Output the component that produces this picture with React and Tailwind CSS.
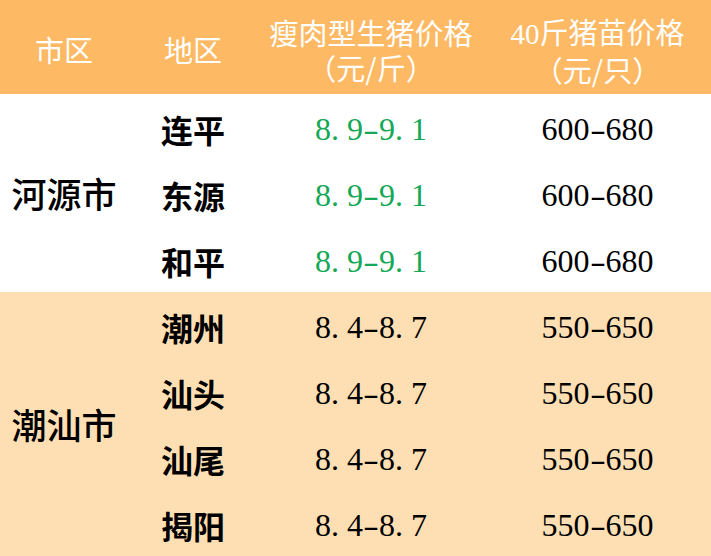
const cjk = '"Noto Sans CJK SC", "Noto Sans", sans-serif';
const num = '"Liberation Serif", "Noto Sans CJK SC", serif';

const groups = [
  {
    city: '河源市',
    bg: 'bg-white',
    rows: [
      { area: '连平', price: '8.9-9.1', piglet: '600-680', green: true },
      { area: '东源', price: '8.9-9.1', piglet: '600-680', green: true },
      { area: '和平', price: '8.9-9.1', piglet: '600-680', green: true },
    ],
  },
  {
    city: '潮汕市',
    bg: 'bg-[#fddfb3]',
    rows: [
      { area: '潮州', price: '8.4-8.7', piglet: '550-650' },
      { area: '汕头', price: '8.4-8.7', piglet: '550-650' },
      { area: '汕尾', price: '8.4-8.7', piglet: '550-650' },
      { area: '揭阳', price: '8.4-8.7', piglet: '550-650' },
    ],
  },
];

// SimSun-like half-width cells for the dot and dash
function Num({ value }) {
  return (
    <span className="whitespace-nowrap" style={{ fontFamily: num }}>
      {value.split('').map((c, i) =>
        c === '.' ? (
          <span key={i} className="inline-block w-[0.5em] text-left">.</span>
        ) : c === '-' ? (
          <span key={i} className="inline-block w-[0.5em] text-center scale-x-150">-</span>
        ) : (
          <span key={i}>{c}</span>
        )
      )}
    </span>
  );
}

export default function App() {
  return (
    <div className="w-[711px] h-[556px] overflow-hidden bg-white" style={{ fontFamily: cjk }}>
      <div className="grid grid-cols-[128px_130px_226px_227px] h-[94px] bg-[#fdb963] text-white text-[29px] leading-[35px]">
        <div className="flex items-center justify-center pt-1">市区</div>
        <div className="flex items-center justify-center pt-1">地区</div>
        <div className="flex flex-col items-center justify-center pt-[6px]">
          <div>瘦肉型生猪价格</div>
          <div>（元/斤）</div>
        </div>
        <div className="flex flex-col items-center justify-center pt-[6px]">
          <div><span style={{ fontFamily: num }}>40</span>斤猪苗价格</div>
          <div>（元/只）</div>
        </div>
      </div>

      {groups.map((g) => (
        <div key={g.city} className={`grid grid-cols-[128px_130px_226px_227px] ${g.bg}`}>
          <div
            className="flex items-center justify-center text-[35px] font-medium text-black"
            style={{ gridRow: `span ${g.rows.length}` }}
          >
            {g.city}
          </div>
          {g.rows.map((r) => (
            <div key={r.area} className="contents">
              <div className="h-[66px] flex items-center justify-center pt-1 text-[32px] font-semibold text-black">
                {r.area}
              </div>
              <div
                className={`h-[66px] flex items-center justify-center pt-1 text-[32px] ${r.green ? 'text-[#16a857]' : 'text-black'}`}
              >
                <Num value={r.price} />
              </div>
              <div className="h-[66px] flex items-center justify-center pt-1 text-[32px] text-black">
                <Num value={r.piglet} />
              </div>
            </div>
          ))}
        </div>
      ))}
    </div>
  );
}
